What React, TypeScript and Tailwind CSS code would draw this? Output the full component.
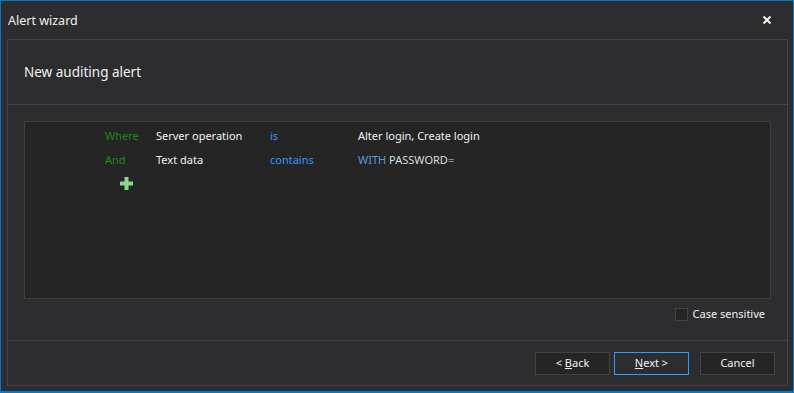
import React, { useState } from 'react';

const rows = [
  { join: 'Where', field: 'Server operation', op: 'is', value: <span className="text-[#f1f1f1]">Alter login, Create login</span> },
  {
    join: 'And',
    field: 'Text data',
    op: 'contains',
    value: (
      <span>
        <span className="text-[#5a9bd8]">WITH</span>{' '}
        <span className="text-[#dcdcdc]">PASSWORD</span>
        <span className="text-[#8a8a8a]">=</span>
      </span>
    ),
  },
];

const Btn: React.FC<{ children: React.ReactNode; primary?: boolean; className?: string }> = ({ children, primary, className }) => (
  <button
    className={
      'w-[75px] h-[23px] text-[11px] text-[#f1f1f1] border ' +
      (primary ? 'border-[#3399ff] bg-[#2d2d30] ' : 'border-[#434346] bg-[#252526] ') +
      (className || '')
    }
  >
    {children}
  </button>
);

export default function App() {
  const [caseSensitive, setCaseSensitive] = useState(false);

  return (
    <div className="w-[794px] h-[393px] bg-[#2d2d30] border border-b-2 border-[#007acc] flex flex-col font-['Segoe_UI','Noto_Sans',sans-serif] text-[#f1f1f1] overflow-hidden">
      {/* title bar */}
      <div className="h-[38px] flex items-center justify-between pl-[7px] pr-[22px] pt-[2px]">
        <span className="text-[12.5px]">Alert wizard</span>
        <svg width="8" height="8" viewBox="0 0 8 8" className="mt-[-2px]">
          <path d="M0.5 0.5 L7.5 7.5 M7.5 0.5 L0.5 7.5" stroke="#f1f1f1" strokeWidth="2" />
        </svg>
      </div>

      <div className="flex-1 ml-[6px] mr-[5px] mb-[5px] border border-[#434346] flex flex-col">
        {/* header */}
        <div className="h-[65px] flex items-center pl-[16px] border-b border-[#434346]">
          <span className="text-[13.5px]">New auditing alert</span>
        </div>

        {/* body */}
        <div className="flex-1 flex flex-col px-[16px] pt-[16px] border-b border-[#434346]">
          <div className="h-[178px] bg-[#252526] border border-[#3e3e42] pl-[80px] pt-[2px] text-[11px]">
            {rows.map((r) => (
              <div key={r.join} className="h-[24px] flex items-center">
                <span className="w-[51px] text-[#1c8a1c]">{r.join}</span>
                <span className="w-[114px]">{r.field}</span>
                <span className="w-[88px] text-[#3794ff]">{r.op}</span>
                {r.value}
              </div>
            ))}
            <div className="pl-[15px] pt-[5px]">
              <svg width="13" height="13" viewBox="0 0 13 13" className="block">
                <path d="M4.5 0 H8.5 V4.5 H13 V8.5 H8.5 V13 H4.5 V8.5 H0 V4.5 H4.5 Z" fill="#8bd68b" />
              </svg>
            </div>
          </div>
          <div className="flex justify-end items-center mt-[7px] pr-[6px]">
            <label className="flex items-center gap-[5px] text-[11px] cursor-pointer">
              <span
                onClick={() => setCaseSensitive(!caseSensitive)}
                className="w-[13px] h-[13px] border border-[#434346] bg-[#252526] flex items-center justify-center"
              >
                {caseSensitive && <span className="w-[7px] h-[7px] bg-[#f1f1f1]" />}
              </span>
              Case sensitive
            </label>
          </div>
        </div>

        {/* footer */}
        <div className="h-[44px] flex items-center justify-end pr-[12px]">
          <Btn>
            &lt; <span className="underline">B</span>ack
          </Btn>
          <Btn primary className="ml-[4px]">
            <span className="underline">N</span>ext &gt;
          </Btn>
          <Btn className="ml-[11px]">Cancel</Btn>
        </div>
      </div>
    </div>
  );
}
